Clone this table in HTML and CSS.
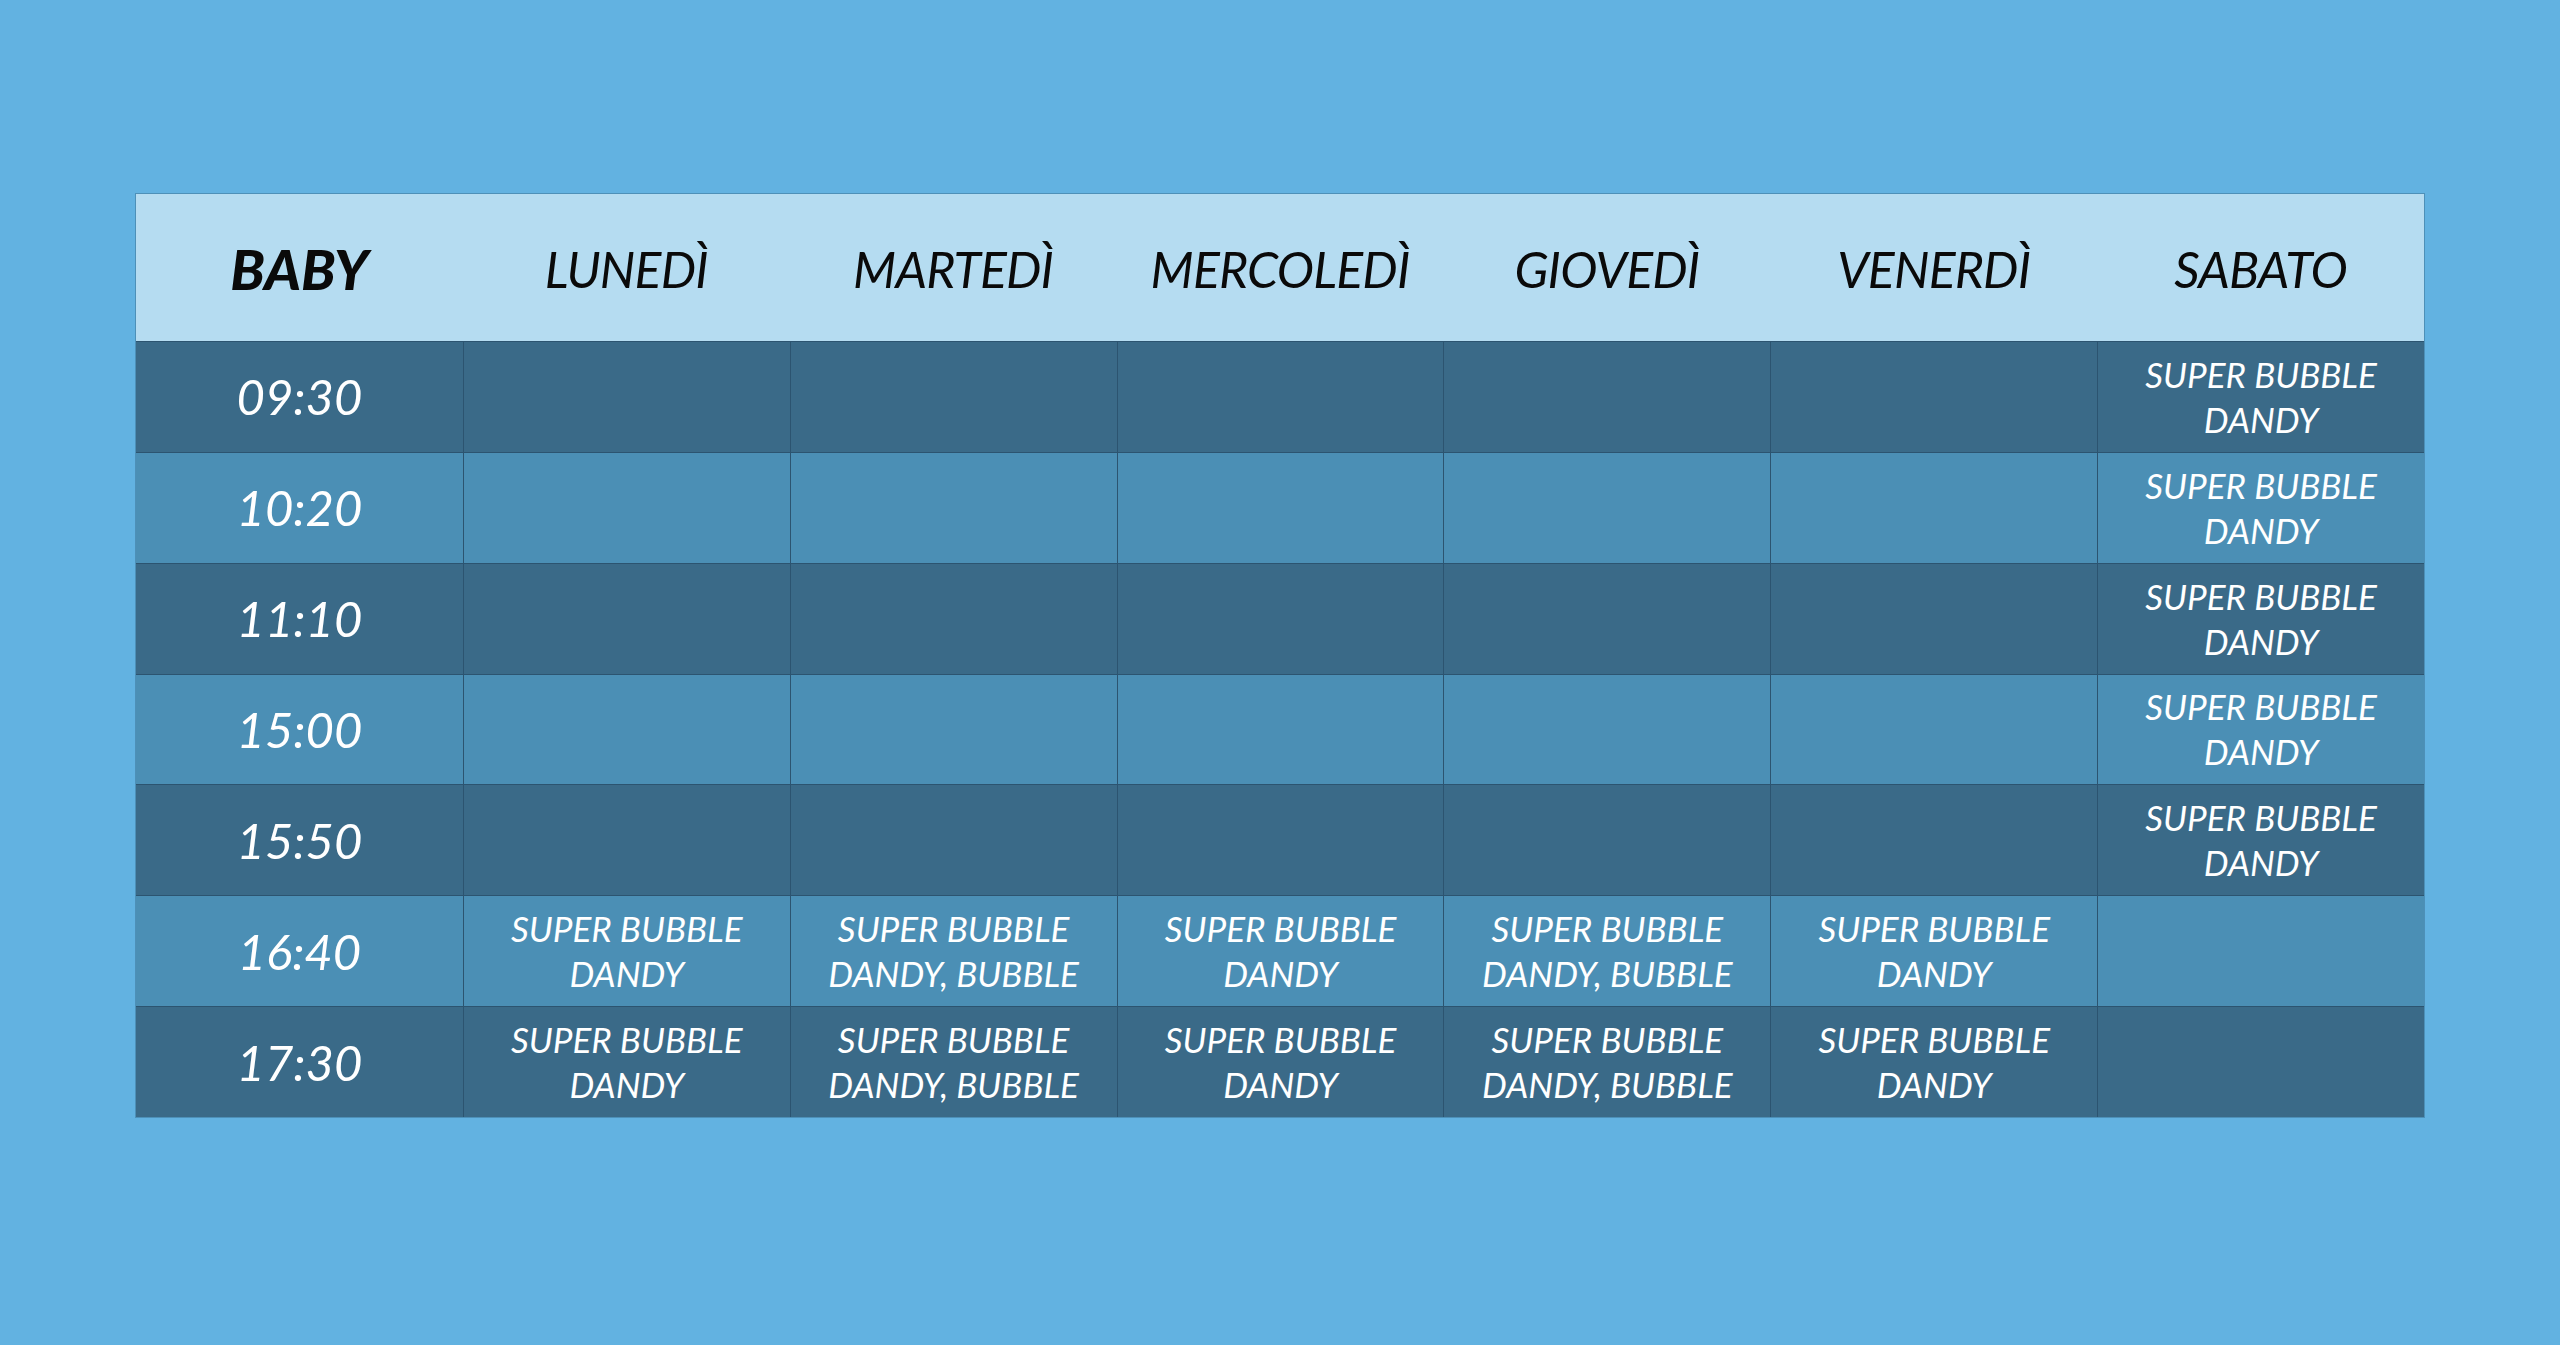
FILE: index.html
```html
<!DOCTYPE html>
<html lang="it">
<head>
<meta charset="utf-8">
<title>Orari Baby</title>
<link rel="stylesheet" href="styles.css">
</head>
<body>
<main class="page">
  <div class="schedule">
    <div class="head first">BABY</div>
    <div class="head">LUNEDÌ</div>
    <div class="head">MARTEDÌ</div>
    <div class="head">MERCOLEDÌ</div>
    <div class="head">GIOVEDÌ</div>
    <div class="head">VENERDÌ</div>
    <div class="head">SABATO</div>

    <div class="cell time dark">09:30</div>
    <div class="cell dark"></div><div class="cell dark"></div><div class="cell dark"></div><div class="cell dark"></div><div class="cell dark"></div>
    <div class="cell dark">SUPER BUBBLE<br>DANDY</div>

    <div class="cell time light">10:20</div>
    <div class="cell light"></div><div class="cell light"></div><div class="cell light"></div><div class="cell light"></div><div class="cell light"></div>
    <div class="cell light">SUPER BUBBLE<br>DANDY</div>

    <div class="cell time dark">11:10</div>
    <div class="cell dark"></div><div class="cell dark"></div><div class="cell dark"></div><div class="cell dark"></div><div class="cell dark"></div>
    <div class="cell dark">SUPER BUBBLE<br>DANDY</div>

    <div class="cell time light">15:00</div>
    <div class="cell light"></div><div class="cell light"></div><div class="cell light"></div><div class="cell light"></div><div class="cell light"></div>
    <div class="cell light">SUPER BUBBLE<br>DANDY</div>

    <div class="cell time dark">15:50</div>
    <div class="cell dark"></div><div class="cell dark"></div><div class="cell dark"></div><div class="cell dark"></div><div class="cell dark"></div>
    <div class="cell dark">SUPER BUBBLE<br>DANDY</div>

    <div class="cell time light">16:40</div>
    <div class="cell light">SUPER BUBBLE<br>DANDY</div>
    <div class="cell light">SUPER BUBBLE<br>DANDY, BUBBLE</div>
    <div class="cell light">SUPER BUBBLE<br>DANDY</div>
    <div class="cell light">SUPER BUBBLE<br>DANDY, BUBBLE</div>
    <div class="cell light">SUPER BUBBLE<br>DANDY</div>
    <div class="cell light"></div>

    <div class="cell time dark">17:30</div>
    <div class="cell dark">SUPER BUBBLE<br>DANDY</div>
    <div class="cell dark">SUPER BUBBLE<br>DANDY, BUBBLE</div>
    <div class="cell dark">SUPER BUBBLE<br>DANDY</div>
    <div class="cell dark">SUPER BUBBLE<br>DANDY, BUBBLE</div>
    <div class="cell dark">SUPER BUBBLE<br>DANDY</div>
    <div class="cell dark"></div>
  </div>
</main>
</body>
</html>
```
FILE: styles.css
```css
html, body {
  margin: 0;
  padding: 0;
}
body {
  background: #62b2e1;
  width: 2560px;
  height: 1345px;
  overflow: hidden;
  font-family: "Lato", "Open Sans", sans-serif;
  font-style: italic;
}
.page {
  padding: 194px 0 0 136px;
}
.schedule {
  width: 2288px;
  height: 923px;
  display: grid;
  grid-template-columns: repeat(7, 1fr);
  grid-template-rows: 147px repeat(7, 1fr);
  box-shadow: 0 0 0 1px rgba(40, 80, 110, 0.35);
}
.head {
  background: #b5dcf1;
  color: #0a0a0a;
  display: flex;
  align-items: center;
  justify-content: center;
  font-size: 50px;
  font-weight: 400;
  letter-spacing: -0.8px;
  padding-top: 2px;
}
.head.first {
  font-weight: 900;
  font-size: 56px;
  letter-spacing: 0;
}
.cell {
  display: flex;
  align-items: center;
  justify-content: center;
  text-align: center;
  color: #ffffff;
  font-size: 35px;
  line-height: 45px;
  border-top: 1px solid #2c5470;
  border-left: 1px solid #2c5470;
}
.cell.time {
  border-left: none;
  font-size: 49px;
}
.dark {
  background: #3a6a88;
}
.light {
  background: #4b8fb5;
}
```
